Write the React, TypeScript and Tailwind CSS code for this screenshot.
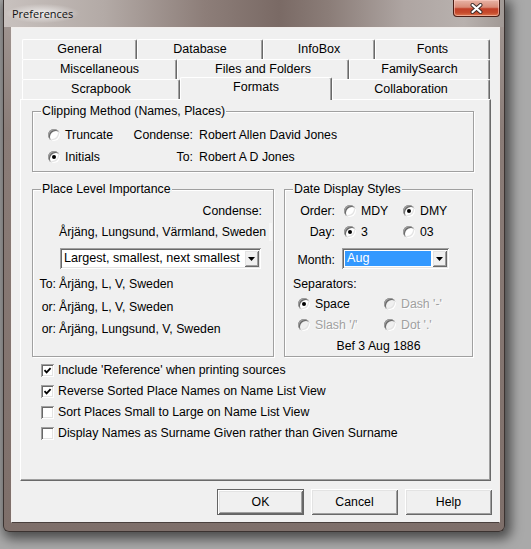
import React from "react";

const bevelIn =
  "shadow-[inset_1px_1px_0_#a0a0a0,inset_-1px_-1px_0_#ffffff,inset_2px_2px_0_#696969,inset_-2px_-2px_0_#e3e3e3]";
const bevelOut =
  "shadow-[inset_1px_1px_0_#ffffff,inset_-1px_-1px_0_#696969,inset_2px_2px_0_#e3e3e3,inset_-2px_-2px_0_#a0a0a0]";
const grayText = "text-[#a0a0a0] [text-shadow:1px_1px_0_#ffffff]";

function Radio({ checked, disabled }: { checked?: boolean; disabled?: boolean }) {
  return (
    <span
      className={`flex h-[12px] w-[12px] shrink-0 items-center justify-center rounded-full ${
        disabled ? "bg-[#f0f0f0]" : "bg-white"
      } shadow-[inset_1px_1px_0_#a0a0a0,inset_-1px_-1px_0_#ffffff,inset_2px_2px_0_#696969,inset_-2px_-2px_0_#e3e3e3]`}
    >
      {checked && (
        <span className={`h-[4px] w-[4px] rounded-full ${disabled ? "bg-[#a0a0a0]" : "bg-black"}`} />
      )}
    </span>
  );
}

function RadioItem({
  label,
  checked,
  disabled,
  className = "",
}: {
  label: string;
  checked?: boolean;
  disabled?: boolean;
  className?: string;
}) {
  return (
    <div className={`flex items-center ${className}`}>
      <Radio checked={checked} disabled={disabled} />
      <span className={`ml-[5px] ${disabled ? grayText : ""}`}>{label}</span>
    </div>
  );
}

function Check({ checked, label }: { checked?: boolean; label: string }) {
  return (
    <div className="flex h-[21px] items-center">
      <span className={`flex h-[13px] w-[13px] shrink-0 items-center justify-center bg-white ${bevelIn}`}>
        {checked && (
          <svg width="9" height="9" viewBox="0 0 9 9">
            <path d="M1.5 4.2 L3.6 6.4 L7.6 2.2" fill="none" stroke="#000" strokeWidth="1.8" />
          </svg>
        )}
      </span>
      <span className="ml-[4px]">{label}</span>
    </div>
  );
}

function Arrow() {
  return (
    <svg width="7" height="4" viewBox="0 0 7 4">
      <path d="M0 0H7L3.5 4Z" fill="#000" />
    </svg>
  );
}

function Combo({
  value,
  className,
  selected,
}: {
  value: string;
  className: string;
  selected?: boolean;
}) {
  return (
    <div className={`flex h-[21px] items-stretch bg-white p-[2px] ${bevelIn} ${className}`}>
      <div
        className={`flex flex-1 items-center pl-[2px] ${
          selected ? "m-[1px] bg-[#3399ff] text-white" : ""
        }`}
      >
        {value}
      </div>
      <div className={`flex w-[15px] items-center justify-center bg-[#f0f0f0] ${bevelOut}`}>
        <Arrow />
      </div>
    </div>
  );
}

function Group({
  title,
  className,
  children,
}: {
  title: string;
  className: string;
  children: React.ReactNode;
}) {
  return (
    <div
      className={`relative border border-[#a0a0a0] shadow-[inset_1px_1px_0_#ffffff,1px_1px_0_#ffffff] ${className}`}
    >
      <span className="absolute -top-[8px] left-[8px] bg-[#f0f0f0] px-[1px] leading-[14px]">
        {title}
      </span>
      {children}
    </div>
  );
}

function Tab({
  label,
  className,
  selected,
}: {
  label: string;
  className: string;
  selected?: boolean;
}) {
  return (
    <div
      className={`flex items-center justify-center rounded-t-[2px] border-l border-t border-r border-white border-r-[#696969] bg-[#f0f0f0] text-[12.5px] shadow-[inset_-1px_0_0_#a0a0a0] ${
        selected ? "relative z-10 -mb-[1px] h-[23px] pb-[3px]" : "h-[20px]"
      } ${className}`}
    >
      {label}
    </div>
  );
}

function Button({ label, isDefault }: { label: string; isDefault?: boolean }) {
  return (
    <div
      className={`flex h-[26px] w-[87px] items-center justify-center bg-[#f0f0f0] ${
        isDefault ? "border border-[#646464]" : ""
      } ${bevelOut}`}
    >
      {label}
    </div>
  );
}

export default function App() {
  return (
    <div className="h-[549px] w-[531px] overflow-hidden whitespace-nowrap bg-[#a9a9a9] font-['Liberation_Sans',Arial,sans-serif] text-[12.3px] text-black">
      <div className="ml-[3px] flex h-[532px] w-[502px] flex-col rounded-b-[6px] border border-t-0 border-[#3b3331] bg-[linear-gradient(180deg,#a39995_0%,#8a7c77_25%,#7e6f6a_100%)] shadow-[3px_4px_12px_3px_rgba(0,0,0,0.55)]">
        {/* title bar */}
        <div className="flex h-[27px] shrink-0 bg-[linear-gradient(90deg,#c8c1be_0%,#b3aaa6_20%,#8d7e79_40%,#7a6a65_55%,#8b7d78_65%,#aea5a2_80%,#b8b1ae_92%,#a19995_100%)]">
          <div className="flex-1 pl-[8px] pt-[5px]">
            <span className="-ml-[6px] bg-[radial-gradient(ellipse_at_center,rgba(255,255,255,0.75),rgba(255,255,255,0)_72%)] px-[6px] py-[2px] font-['Open_Sans',sans-serif] text-[11px] text-[#111]">
              Preferences
            </span>
          </div>
          <div className="mr-[4px] flex h-[17px] w-[47px] items-center justify-center rounded-b-[4px] border border-t-0 border-[#4a1d15] bg-[linear-gradient(180deg,#e7b4a6_0%,#d98b77_45%,#c13f27_55%,#c64b2d_80%,#de7a52_100%)] shadow-[inset_0_0_0_1px_rgba(255,210,200,0.55)]">
            <svg width="13" height="11" viewBox="0 0 13 11">
              <path d="M2.5 2 L10.5 9 M10.5 2 L2.5 9" stroke="#3a2a28" strokeWidth="4" strokeLinecap="round" />
              <path d="M2.5 2 L10.5 9 M10.5 2 L2.5 9" stroke="#ffffff" strokeWidth="2.2" strokeLinecap="round" />
            </svg>
          </div>
        </div>

        {/* client area */}
        <div className="mb-[8px] ml-[7px] mr-[4px] flex flex-1 flex-col border border-[#f2eeec] border-b-[#4a403d] bg-[#f0f0f0] pb-[7px] pl-[8px] pr-[8px] pt-[11px]">
          {/* tab rows */}
          <div className="flex flex-col pl-[2px]">
            <div className="flex">
              <Tab label="General" className="w-[115px]" />
              <Tab label="Database" className="w-[126px]" />
              <Tab label="InfoBox" className="w-[112px]" />
              <Tab label="Fonts" className="w-[115px]" />
            </div>
            <div className="flex">
              <Tab label="Miscellaneous" className="w-[155px]" />
              <Tab label="Files and Folders" className="w-[172px]" />
              <Tab label="FamilySearch" className="w-[141px]" />
            </div>
            <div className="-mt-[2px] flex h-[22px] items-end">
              <Tab label="Scrapbook" className="w-[158px]" />
              <Tab label="Formats" className="w-[152px]" selected />
              <Tab label="Collaboration" className="w-[158px]" />
            </div>
          </div>

          {/* tab page */}
          <div className="flex h-[382px] flex-col border border-white border-b-[#696969] border-r-[#696969] pl-[11px] pt-[11px] shadow-[inset_-1px_-1px_0_#a0a0a0]">
            <Group title="Clipping Method (Names, Places)" className="h-[61px] w-[442px] pl-[15px] pt-[12px]">
              <div className="flex h-[22px] items-center">
                <RadioItem label="Truncate" className="w-[85px]" />
                <span className="w-[60px] text-right">Condense:</span>
                <span className="ml-[6px]">Robert Allen David Jones</span>
              </div>
              <div className="flex h-[22px] items-center">
                <RadioItem label="Initials" checked className="w-[85px]" />
                <span className="w-[60px] text-right">To:</span>
                <span className="ml-[6px]">Robert A D Jones</span>
              </div>
            </Group>

            <div className="mt-[17px] flex gap-[10px]">
              <Group title="Place Level Importance" className="flex h-[168px] w-[242px] shrink-0 flex-col pr-[11px] pt-[11px]">
                <div className="flex h-[20px] items-center justify-end">Condense:</div>
                <div className="mt-[1px] flex h-[20px] items-center pl-[26px]">
                  <span className="pr-[3px] shadow-[3px_0_0_#f7f7f7]">Årjäng, Lungsund, Värmland, Sweden</span>
                </div>
                <Combo value="Largest, smallest, next smallest" className="ml-[27px] mt-[6px] w-[201px] text-[12.6px]" />
                <div className="mt-[5px] flex h-[20px] items-center">
                  <span className="w-[23px] text-right">To:</span>
                  <span className="ml-[3px]">Årjäng, L, V, Sweden</span>
                </div>
                <div className="mt-[3px] flex h-[20px] items-center">
                  <span className="w-[23px] text-right">or:</span>
                  <span className="ml-[3px]">Årjäng, L, V, Sweden</span>
                </div>
                <div className="mt-[2px] flex h-[20px] items-center">
                  <span className="w-[23px] text-right">or:</span>
                  <span className="ml-[3px]">Årjäng, Lungsund, V, Sweden</span>
                </div>
              </Group>

              <Group title="Date Display Styles" className="flex h-[168px] w-[189px] shrink-0 flex-col pt-[11px]">
                <div className="flex h-[20px] items-center">
                  <span className="w-[50px] text-right">Order:</span>
                  <RadioItem label="MDY" className="ml-[9px] w-[59px]" />
                  <RadioItem label="DMY" checked />
                </div>
                <div className="mt-[1px] flex h-[20px] items-center">
                  <span className="w-[50px] text-right">Day:</span>
                  <RadioItem label="3" checked className="ml-[9px] w-[59px]" />
                  <RadioItem label="03" />
                </div>
                <div className="mt-[6px] flex h-[21px] items-center">
                  <span className="w-[50px] pt-[3px] text-right">Month:</span>
                  <Combo value="Aug" selected className="ml-[7px] w-[107px] text-[12.6px]" />
                </div>
                <div className="mt-[5px] flex h-[20px] items-center pl-[8px]">Separators:</div>
                <div className="flex h-[20px] items-center pl-[13px]">
                  <RadioItem label="Space" checked className="w-[86px]" />
                  <RadioItem label="Dash '-'" disabled />
                </div>
                <div className="mt-[1px] flex h-[20px] items-center pl-[13px]">
                  <RadioItem label="Slash '/'" disabled className="w-[86px]" />
                  <RadioItem label="Dot '.'" disabled />
                </div>
                <div className="mt-[1px] flex h-[20px] items-center justify-center">Bef 3 Aug 1886</div>
              </Group>
            </div>

            <div className="mt-[3px] flex flex-col pl-[9px]">
              <Check checked label="Include 'Reference' when printing sources" />
              <Check checked label="Reverse Sorted Place Names on Name List View" />
              <Check label="Sort Places Small to Large on Name List View" />
              <Check label="Display Names as Surname Given rather than Given Surname" />
            </div>
          </div>

          {/* buttons */}
          <div className="-mr-[1px] mt-[8px] flex justify-end gap-[7px]">
            <Button label="OK" isDefault />
            <Button label="Cancel" />
            <Button label="Help" />
          </div>
        </div>
      </div>
    </div>
  );
}
